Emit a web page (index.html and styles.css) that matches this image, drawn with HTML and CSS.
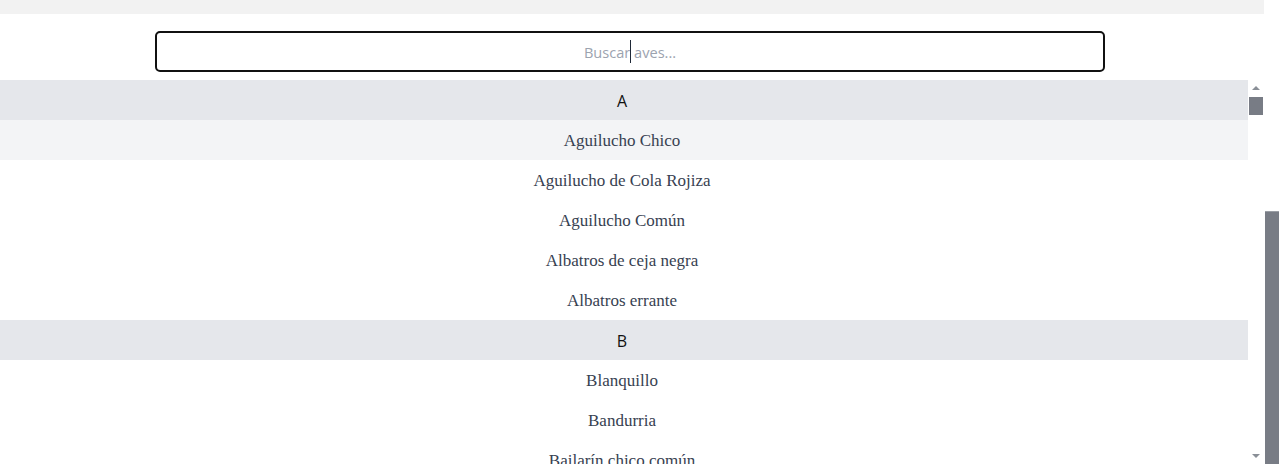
FILE: index.html
```html
<!DOCTYPE html>
<html lang="es">
<head>
<meta charset="utf-8">
<title>Aves</title>
<link rel="stylesheet" href="styles.css">
</head>
<body>
<div class="page">
  <div class="topbar"></div>
  <div class="search">
    <div class="field">
      <input class="search-input" type="text" placeholder="Buscar aves...">
    </div>
  </div>
  <div class="list-wrap">
    <ul class="list">
      <li class="group">A</li>
      <li class="item hover">Aguilucho Chico</li>
      <li class="item">Aguilucho de Cola Rojiza</li>
      <li class="item">Aguilucho Común</li>
      <li class="item">Albatros de ceja negra</li>
      <li class="item">Albatros errante</li>
      <li class="group">B</li>
      <li class="item">Blanquillo</li>
      <li class="item">Bandurria</li>
      <li class="item">Bailarín chico común</li>
    </ul>
    <div class="list-scrollbar">
      <svg class="arrow" width="16" height="14" viewBox="0 0 16 14"><path d="M4 10 L8 6 L12 10 Z" fill="#8a8f97"/></svg>
      <div class="list-thumb"></div>
      <div class="list-track"></div>
      <svg class="arrow" width="16" height="14" viewBox="0 0 16 14"><path d="M4 4 L8 8 L12 4 Z" fill="#8a8f97"/></svg>
    </div>
  </div>
</div>
<div class="page-scrollbar">
  <div class="page-thumb"></div>
</div>
</body>
</html>
```
FILE: styles.css
```css
html, body {
  margin: 0;
  padding: 0;
  height: 464px;
  overflow: hidden;
  background: #ffffff;
}
body {
  display: flex;
}
.page {
  flex: 1;
  display: flex;
  flex-direction: column;
  min-width: 0;
}
.topbar {
  height: 14px;
  background: #f2f2f2;
}
.search {
  display: flex;
  justify-content: center;
  padding: 17px 4px 8px 0;
  background: #ffffff;
}
.field {
  position: relative;
  width: 950px;
}
.field::after {
  content: "";
  position: absolute;
  left: 475px;
  top: 9px;
  width: 1px;
  height: 23px;
  background: #1f2937;
}
.search-input {
  display: block;
  box-sizing: border-box;
  width: 950px;
  height: 41px;
  border: 2px solid #111111;
  border-radius: 5px;
  outline: none;
  text-align: center;
  font-family: "Open Sans", "Noto Sans", sans-serif;
  font-size: 14.6px;
  color: #111827;
  background: #ffffff;
  padding: 0 12px;
}
.search-input::placeholder {
  color: #9ca3af;
}
.list-wrap {
  flex: 1;
  display: flex;
  min-height: 0;
}
.list {
  flex: 1;
  list-style: none;
  margin: 0;
  padding: 0;
  overflow: hidden;
}
.group {
  box-sizing: border-box;
  height: 40px;
  display: flex;
  align-items: center;
  justify-content: center;
  padding: 2px 4px 0 0;
  background: #e5e7eb;
  font-family: "Open Sans", "Noto Sans", sans-serif;
  font-size: 16px;
  color: #111111;
}
.item {
  box-sizing: border-box;
  height: 40px;
  display: flex;
  align-items: center;
  justify-content: center;
  padding: 2px 4px 0 0;
  font-family: "Liberation Serif", "DejaVu Serif", serif;
  font-size: 17px;
  color: #374151;
}
.item.hover {
  background: #f3f4f6;
}
.list-scrollbar {
  width: 16px;
  display: flex;
  flex-direction: column;
  background: #ffffff;
}
.arrow {
  display: block;
  flex: none;
}
.list-thumb {
  flex: none;
  height: 18px;
  margin: 3px 1px 0;
  background: #787c85;
}
.list-track {
  flex: 1;
}
.page-scrollbar {
  width: 16px;
  display: flex;
  flex-direction: column;
  justify-content: flex-end;
  background: #ffffff;
}
.page-thumb {
  height: 252px;
  margin: 0 1px;
  background: #787c85;
  border-top: 1px solid #9a9ea5;
}
```
